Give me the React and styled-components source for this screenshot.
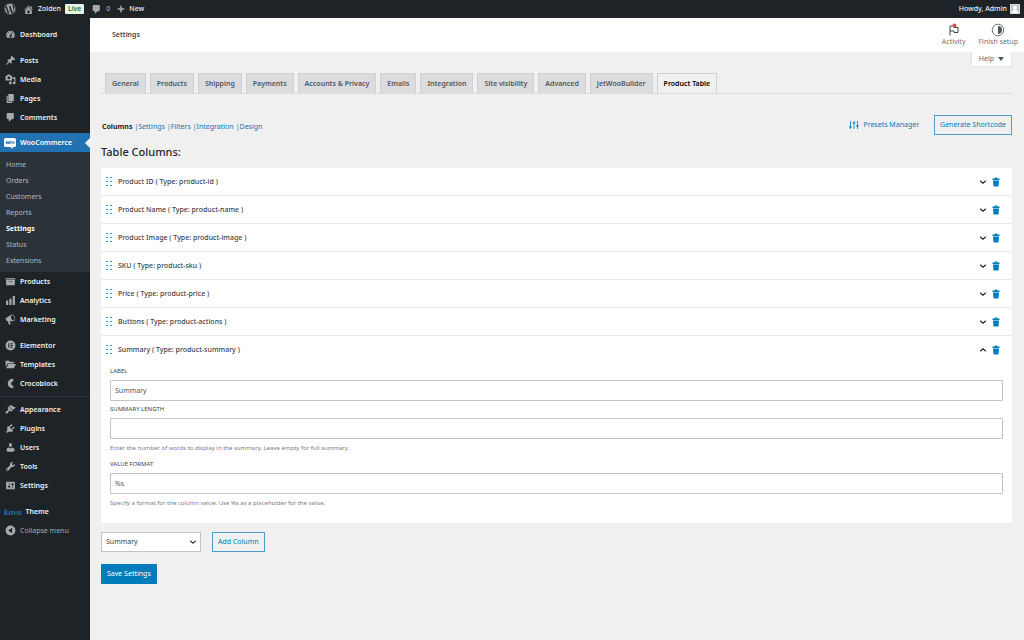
import React, { useState } from 'react'
import styled, { createGlobalStyle, css } from 'styled-components'
import { FaWordpress, FaPlus } from 'react-icons/fa'

const icons = {
  dashboard: 'M3.76 16h12.48c1.1-1.37 1.76-3.11 1.76-5 0-4.42-3.58-8-8-8s-8 3.58-8 8c0 1.89.66 3.63 1.76 5zM10 4c.55 0 1 .45 1 1s-.45 1-1 1-1-.45-1-1 .45-1 1-1zM6 6c.55 0 1 .45 1 1s-.45 1-1 1-1-.45-1-1 .45-1 1-1zm8 0c.55 0 1 .45 1 1s-.45 1-1 1-1-.45-1-1 .45-1 1-1zm-5.37 5.55L12 7v6c0 1.1-.9 2-2 2s-2-.9-2-2c0-.57.24-1.08.63-1.45zM4 10c.55 0 1 .45 1 1s-.45 1-1 1-1-.45-1-1 .45-1 1-1zm12 0c.55 0 1 .45 1 1s-.45 1-1 1-1-.45-1-1 .45-1 1-1z',
  home: 'M16 8.5l1.53 1.53-1.06 1.06L10 4.6l-6.47 6.49-1.06-1.06L10 2.5l4 4v-2h2v4zm-6-2.46l6 5.99V18H4v-5.97zM12 17v-5H8v5h4z',
  pin: 'M10.44 3.02l1.82-1.82 6.36 6.35-1.83 1.82c-1.05-.68-2.48-.57-3.41.36l-.75.75c-.92.93-1.04 2.35-.35 3.41l-1.83 1.82-2.41-2.41-2.8 2.79c-.42.42-3.38 2.71-3.8 2.29s1.86-3.39 2.28-3.81l2.79-2.79L4.1 9.36l1.83-1.82c1.05.69 2.48.57 3.4-.36l.75-.75c.93-.92 1.05-2.35.36-3.41z',
  media: 'M13 11V4c0-.55-.45-1-1-1h-1.67L9 1H5L3.67 3H2c-.55 0-1 .45-1 1v7c0 .55.45 1 1 1h10c.55 0 1-.45 1-1zM7 4.5c1.38 0 2.5 1.12 2.5 2.5S8.38 9.5 7 9.5 4.5 8.38 4.5 7 5.62 4.5 7 4.5zM14 6h5v10.5c0 1.38-1.12 2.5-2.5 2.5S14 17.88 14 16.5s1.12-2.5 2.5-2.5c.17 0 .34.02.5.05V9h-3V6zm-4 8.05V13h2v3.5c0 1.38-1.12 2.5-2.5 2.5S7 17.88 7 16.5 8.12 14 9.5 14c.17 0 .34.02.5.05z',
  page: 'M6 15V2h10v13H6zm-1 1h8v2H3V5h2v11z',
  comment: 'M5 2h9c1.1 0 2 .9 2 2v7c0 1.1-.9 2-2 2h-2l-5 5v-5H5c-1.1 0-2-.9-2-2V4c0-1.1.9-2 2-2z',
  archive: 'M19 4v2H1V4h18zM2 7h16v10H2V7zm11 3V9H7v1h6z',
  chart: 'M18 18V2h-4v16h4zm-6 0V7H8v11h4zm-6 0v-8H2v8h4z',
  megaphone: 'M18.15 5.94c.46 1.62.38 3.22-.02 4.48-.42 1.28-1.26 2.18-2.3 2.48-.16.06-.26.06-.4.06-.06.02-.12.02-.18.02-.06.02-.14.02-.22.02h-6.8l2.22 5.5c.02.14-.06.26-.14.34-.08.1-.24.16-.34.16H6.95c-.1 0-.26-.06-.34-.16-.08-.08-.16-.2-.14-.34l-1-5.5H4.25l-.02-.02c-.5.06-1.08-.18-1.54-.62s-.88-1.08-1.06-1.88c-.24-.8-.2-1.56-.02-2.2.18-.62.58-1.08 1.06-1.3l.02-.02 9-5.4c.1-.06.18-.1.24-.16.06-.04.14-.08.24-.12.16-.08.28-.12.5-.18 1.04-.3 2.24.1 3.22.98s1.84 2.24 2.26 3.86zm-2.58 5.98h-.02c.4-.1.74-.34 1.04-.7.58-.7.86-1.76.86-3.04 0-.64-.1-1.3-.28-1.98-.34-1.36-1.02-2.5-1.78-3.24s-1.68-1.1-2.46-.88c-.82.22-1.4.96-1.7 2-.32 1.04-.28 2.36.06 3.72.38 1.36 1 2.5 1.8 3.24.78.74 1.62 1.1 2.48.88z',
  elementor: 'M10 1a9 9 0 1 0 0 18 9 9 0 0 0 0-18zM6 6h2v8H6V6zm4 0h4v1.6h-4V6zm0 3.2h4v1.6h-4V9.2zm0 3.2h4V14h-4v-1.6z',
  folder: 'M1 3h6l2 2h7v3H5l-4 6V3zm5 6h14l-4 8H2l4-8z',
  croco: 'M15 1.500A8.600 8.600 0 0 0 5 10a8.600 8.600 0 0 0 10 8.500v-4.300a4.400 4.400 0 0 1-4-4.200 4.400 4.400 0 0 1 4-4.200z',
  appearance: 'M14.48 11.06L7.41 3.99l1.5-1.5c.5-.56 2.3-.47 3.51.32 1.21.8 1.43 1.28 2.91 2.1 1.18.64 2.45 1.26 4.45.85zm-.71.71L6.7 4.7 4.93 6.47c-.39.39-.39 1.02 0 1.41l1.06 1.06c.39.39.39 1.03 0 1.42-.6.6-1.43 1.11-2.21 1.69-.35.26-.7.53-1.01.84C1.43 14.23.4 16.08 1.4 17.07c.99 1 2.84-.03 4.18-1.36.31-.31.58-.66.85-1.02.57-.78 1.08-1.61 1.69-2.21.39-.39 1.02-.39 1.41 0l1.06 1.06c.39.39 1.02.39 1.41 0z',
  plugins: 'M13.11 4.36L9.87 7.6 8 5.73l3.24-3.24c.35-.34 1.05-.2 1.56.32.52.51.66 1.21.31 1.55zm-8 1.77l.91-1.12 9.01 9.01-1.19.84c-.71.71-2.63 1.16-3.82 1.16H6.14L4.9 17.26c-.59.59-1.54.59-2.12 0-.59-.58-.59-1.53 0-2.12l1.24-1.24v-3.88c0-1.13.4-3.19 1.09-3.89zm7.26 3.97l3.24-3.24c.34-.35 1.04-.21 1.55.31.52.51.66 1.21.31 1.55l-3.24 3.25z',
  users: 'M10 9.25c-2.27 0-2.73-3.44-2.73-3.44C7 4.02 7.82 2 9.97 2c2.16 0 2.98 2.02 2.71 3.81 0 0-.41 3.44-2.68 3.44zm0 2.57L12.72 10c2.39 0 4.52 2.33 4.52 4.53v2.49s-3.65 1.13-7.24 1.13c-3.65 0-7.24-1.13-7.24-1.13v-2.49c0-2.25 1.94-4.48 4.47-4.48z',
  tools: 'M16.68 9.77c-1.34 1.34-3.3 1.67-4.95.99l-5.41 6.52c-.99.99-2.59.99-3.58 0s-.99-2.59 0-3.57l6.52-5.42c-.68-1.65-.35-3.61.99-4.95 1.28-1.28 3.12-1.62 4.72-1.06l-2.89 2.89 2.82 2.82 2.86-2.87c.53 1.58.18 3.39-1.08 4.65zM3.81 16.21c.4.39 1.04.39 1.43 0 .4-.4.4-1.04 0-1.43-.39-.4-1.03-.4-1.43 0-.39.39-.39 1.03 0 1.43z',
  settings: 'M18 16V4c0-.55-.45-1-1-1H3c-.55 0-1 .45-1 1v12c0 .55.45 1 1 1h14c.55 0 1-.45 1-1zM8 11h1c.55 0 1 .45 1 1s-.45 1-1 1H8v1.5c0 .28-.22.5-.5.5s-.5-.22-.5-.5V13H6c-.55 0-1-.45-1-1s.45-1 1-1h1V5.5c0-.28.22-.5.5-.5s.5.22.5.5V11zm5-2h-1c-.55 0-1-.45-1-1s.45-1 1-1h1V5.5c0-.28.22-.5.5-.5s.5.22.5.5V7h1c.55 0 1 .45 1 1s-.45 1-1 1h-1v5.5c0 .28-.22.5-.5.5s-.5-.22-.5-.5V9z',
  collapse: 'M10 1a9 9 0 1 0 0 18 9 9 0 0 0 0-18zm3 4v10l-7-5z',
  trash: 'M3 3h4l1-2h4l1 2h4v3H3V3zm1 4h12l-1 12H5L4 7z',
  up: 'M3 13l7-6 7 6',
  down: 'M3 7l7 6 7-6',
}

const Icon = ({ name, size = 11 }) => (
  <svg width={size} height={size} viewBox="0 0 20 20" fill="currentColor" fillRule="evenodd" aria-hidden="true">
    <path d={icons[name]} />
  </svg>
)

const Chevron = ({ up }) => (
  <svg width="8" height="8" viewBox="0 0 20 20" fill="none" stroke="currentColor" strokeWidth="3" aria-hidden="true">
    <path d={up ? icons.up : icons.down} />
  </svg>
)

const WooIcon = () => (
  <svg width="12" height="12" viewBox="0 0 24 24" aria-hidden="true">
    <path fill="#fff" d="M3 2h18a3 3 0 0 1 3 3v12a3 3 0 0 1-3 3h-4l1 4-6-4H3a3 3 0 0 1-3-3V5a3 3 0 0 1 3-3z" />
    <path fill="none" stroke="#2271b1" strokeWidth="1.8" d="M4 8l1.500 6L8 9l1.500 5L11 8" />
    <circle cx="14" cy="11" r="2" fill="none" stroke="#2271b1" strokeWidth="1.600" />
    <circle cx="19" cy="11" r="2" fill="none" stroke="#2271b1" strokeWidth="1.600" />
  </svg>
)

const FlagIcon = () => (
  <svg width="12" height="14" viewBox="0 0 12 14" fill="none" aria-hidden="true">
    <path d="M2 12.500V3h4v1.500h4v5H6V8H2" stroke="#3c434a" />
    <circle cx="6.500" cy="2.500" r="2" fill="#d94f4f" />
  </svg>
)

const SetupIcon = () => (
  <svg width="14" height="14" viewBox="0 0 14 14" aria-hidden="true">
    <circle cx="7" cy="7" r="5.800" fill="none" stroke="#757575" />
    <path d="M7 3a4 4 0 0 1 0 8z" fill="#50575e" />
  </svg>
)

const SlidersIcon = () => (
  <svg width="10" height="10" viewBox="0 0 10 10" stroke="#007cba" fill="none" aria-hidden="true">
    <path d="M1.500 1v8M5 1v8M8.500 1v8" strokeWidth=".8" />
    <path d="M0 7h3M3.500 3h3M7 6h3" />
  </svg>
)

const HandleIcon = () => (
  <svg width="6" height="9" viewBox="0 0 6 9" fill="#2f97c9" aria-hidden="true">
    {[0, 4, 8].map(y => (
      <React.Fragment key={y}>
        <rect x="0" y={y} width="2" height="1" />
        <rect x="4" y={y} width="2" height="1" />
      </React.Fragment>
    ))}
  </svg>
)

const menuGroups = [
  [['Dashboard', 'dashboard']],
  [['Posts', 'pin'], ['Media', 'media'], ['Pages', 'page'], ['Comments', 'comment']],
  [['WooCommerce', 'woo'], ['Products', 'archive'], ['Analytics', 'chart'], ['Marketing', 'megaphone']],
  [['Elementor', 'elementor'], ['Templates', 'folder'], ['Crocoblock', 'croco']],
  [['Appearance', 'appearance'], ['Plugins', 'plugins'], ['Users', 'users'], ['Tools', 'tools'], ['Settings', 'settings']],
]
const submenu = ['Home', 'Orders', 'Customers', 'Reports', 'Settings', 'Status', 'Extensions']
const tabs = ['General', 'Products', 'Shipping', 'Payments', 'Accounts & Privacy', 'Emails', 'Integration', 'Site visibility', 'Advanced', 'JetWooBuilder', 'Product Table']
const sections = ['Columns', 'Settings', 'Filters', 'Integration', 'Design']
const columns = [
  ['Product ID', 'product-id'],
  ['Product Name', 'product-name'],
  ['Product Image', 'product-image'],
  ['SKU', 'product-sku'],
  ['Price', 'product-price'],
  ['Buttons', 'product-actions'],
  ['Summary', 'product-summary'],
]

function App() {
  const [open, setOpen] = useState('Summary')
  const [label, setLabel] = useState('Summary')
  const [length, setLength] = useState('')
  const [format, setFormat] = useState('%s')

  return (
    <Page>
      <GlobalStyle />
      <AdminBar>
        <BarLink href="#wp" aria-label="About WordPress"><FaWordpress size={12} color="#a7aaad" /></BarLink>
        <BarLink href="#site"><Icon name="home" />Zolden <Live>Live</Live></BarLink>
        <BarLink href="#comments" $muted><Icon name="comment" />0</BarLink>
        <BarLink href="#new"><FaPlus size={8} color="#a7aaad" />New</BarLink>
        <Account href="#profile">Howdy, Admin
          <Avatar>
            <svg width="8" height="8" viewBox="0 0 10 10" fill="#fff" aria-hidden="true">
              <circle cx="5" cy="3.500" r="2.500" />
              <path d="M1 10V9q1-3 4-3t4 3v1z" />
            </svg>
          </Avatar>
        </Account>
      </AdminBar>
      <Body>
        <Sidebar>
          {menuGroups.map((group, i) => (
            <MenuGroup key={i} $line={i === 4} $tight={i === 2}>
              {group.map(([text, icon]) => (
                <React.Fragment key={text}>
                  <MenuItem href={'#' + icon} $active={icon === 'woo'}>
                    <MenuIcon>{icon === 'woo' ? <WooIcon /> : <Icon name={icon} />}</MenuIcon>{text}
                  </MenuItem>
                  {icon === 'woo' && (
                    <Submenu>
                      {submenu.map(item => (
                        <SubItem key={item} href="#woo" $active={item === 'Settings'}>{item}</SubItem>
                      ))}
                    </Submenu>
                  )}
                </React.Fragment>
              ))}
            </MenuGroup>
          ))}
          <MenuGroup>
            <ThemeItem href="#theme"><Kava>kava</Kava>Theme</ThemeItem>
            <Collapse type="button"><MenuIcon><Icon name="collapse" /></MenuIcon>Collapse menu</Collapse>
          </MenuGroup>
        </Sidebar>
        <Main>
          <Header>
            <HeaderTitle>Settings</HeaderTitle>
            <HeaderButton type="button"><FlagIcon />Activity</HeaderButton>
            <HeaderButton type="button"><SetupIcon />Finish setup</HeaderButton>
          </Header>
          <Content>
            <Help type="button">Help <Arrow /></Help>
            <Tabs>
              {tabs.map(tab => (
                <Tab key={tab} href="#tab" $active={tab === 'Product Table'}>{tab}</Tab>
              ))}
            </Tabs>
            <Toolbar>
              <Sections>
                {sections.map((s, i) => (
                  <li key={s}><SectionLink href="#section" $active={i === 0}>{s}</SectionLink></li>
                ))}
              </Sections>
              <Presets type="button"><SlidersIcon />Presets Manager</Presets>
              <OutlineButton type="button">Generate Shortcode</OutlineButton>
            </Toolbar>
            <Title>Table Columns:</Title>
            <List>
              {columns.map(([name, type]) => (
                <Item key={type}>
                  <ItemHead>
                    <HandleIcon />
                    <ItemName>{name} ( Type: {type} )</ItemName>
                    <IconButton
                      type="button"
                      aria-label={'Toggle ' + name}
                      aria-expanded={open === name}
                      onClick={() => setOpen(open === name ? '' : name)}
                    >
                      <Chevron up={open === name} />
                    </IconButton>
                    <IconButton type="button" aria-label={'Delete ' + name} $blue><Icon name="trash" size={10} /></IconButton>
                  </ItemHead>
                  {open === name && (
                    <Fields>
                      <Label htmlFor="label">Label</Label>
                      <Input id="label" value={label} onChange={e => setLabel(e.target.value)} />
                      <Label htmlFor="length">Summary length</Label>
                      <Input id="length" value={length} onChange={e => setLength(e.target.value)} />
                      <Hint>Enter the number of words to display in the summary. Leave empty for full summary.</Hint>
                      <Label htmlFor="format">Value format</Label>
                      <Input id="format" value={format} onChange={e => setFormat(e.target.value)} />
                      <Hint>Specify a format for the column value. Use %s as a placeholder for the value.</Hint>
                    </Fields>
                  )}
                </Item>
              ))}
            </List>
            <AddRow>
              <SelectWrap>
                <Select aria-label="Column type" defaultValue="Summary">
                  {columns.map(([name]) => <option key={name}>{name}</option>)}
                </Select>
                <SelectArrow><Chevron /></SelectArrow>
              </SelectWrap>
              <OutlineButton type="button">Add Column</OutlineButton>
            </AddRow>
            <SaveButton type="button">Save Settings</SaveButton>
          </Content>
        </Main>
      </Body>
    </Page>
  )
}
export default App

const GlobalStyle = createGlobalStyle`
  * {
    box-sizing: border-box;
  }
  body {
    margin: 0;
    background: #f0f0f0;
    color: #3c434a;
    font-family: "Noto Sans", "Open Sans", sans-serif;
    font-size: 7px;
    line-height: 10px;
  }
  button, input, select {
    font: inherit;
    color: inherit;
  }
  button {
    padding: 0;
    border: none;
    background: none;
    cursor: pointer;
    white-space: nowrap;
  }
  a {
    text-decoration: none;
    white-space: nowrap;
  }
  svg {
    flex: none;
  }
`
const Page = styled.div`
  min-height: 100vh;
  display: flex;
  flex-direction: column;
`
const AdminBar = styled.header`
  height: 18px;
  padding: 0 4px;
  display: flex;
  align-items: center;
  gap: 7px;
  background: #1d2327;
`
const BarLink = styled.a`
  display: flex;
  align-items: center;
  gap: 4px;
  color: ${p => (p.$muted ? '#a7aaad' : '#f0f0f1')};
  font-weight: 500;
  > svg {
    color: #a7aaad;
  }
`
const Live = styled.span`
  padding: 0 3px;
  border-radius: 1px;
  background: #e6f2e8;
  color: #007017;
`
const Account = styled(BarLink)`
  margin-left: auto;
  gap: 3px;
`
const Avatar = styled.span`
  display: flex;
  background: #c3c4c7;
  border: 1px solid #dcdcde;
`
const Body = styled.div`
  flex: 1;
  display: flex;
`
const Sidebar = styled.nav`
  flex: none;
  width: 90px;
  background: #1d2327;
`
const MenuGroup = styled.div`
  padding-top: ${p => (p.$tight ? '6px' : '7px')};
  ${p => p.$line && css`
    box-shadow: inset 0 3px #1d2327, inset 0 4px #2c3338;
  `}
`
const menuRow = css`
  width: 100%;
  height: 19px;
  display: flex;
  align-items: center;
  padding-left: 4px;
  gap: 4px;
  color: #f0f0f1;
  font-weight: 600;
`
const MenuItem = styled.a`
  ${menuRow}
  ${p => p.$active && css`
    position: relative;
    background: #2271b1;
    color: #fff;
    &::after {
      content: '';
      position: absolute;
      right: 0;
      border: 5px solid transparent;
      border-right-color: #f0f0f0;
      border-left-width: 0;
    }
  `}
`
const MenuIcon = styled.span`
  width: 12px;
  display: flex;
  justify-content: center;
  color: #a7aaad;
`
const ThemeItem = styled.a`
  ${menuRow}
`
const Kava = styled.span`
  color: #2271b1;
  font-family: "Liberation Serif", serif;
  font-size: 9px;
  font-style: italic;
  font-weight: 700;
`
const Collapse = styled.button`
  ${menuRow}
  color: #a7aaad;
  font-weight: 400;
`
const Submenu = styled.div`
  padding: 5px 0 3px;
  background: #2c3338;
`
const SubItem = styled.a`
  display: block;
  padding-left: 6px;
  line-height: 16px;
  color: ${p => (p.$active ? '#fff' : '#b4b9be')};
  font-weight: ${p => (p.$active ? 700 : 400)};
`
const Main = styled.main`
  flex: 1;
  min-width: 0;
`
const Header = styled.div`
  height: 34px;
  padding: 0 6px 0 22px;
  display: flex;
  align-items: center;
  gap: 13px;
  background: #fff;
`
const HeaderTitle = styled.h1`
  flex: 1;
  margin: 0;
  font-size: 7px;
  font-weight: 600;
`
const HeaderButton = styled.button`
  display: flex;
  flex-direction: column;
  align-items: center;
  color: #757575;
  svg {
    height: 14px;
  }
`
const Content = styled.div`
  display: flex;
  flex-direction: column;
  padding: 0 12px 0 11px;
`
const Help = styled.button`
  align-self: flex-end;
  height: 15px;
  padding: 0 7px;
  display: flex;
  align-items: center;
  gap: 4px;
  background: #fff;
  border: 1px solid #e5e5e5;
  border-top: none;
  color: #646970;
`
const Arrow = styled.span`
  border: 3px solid transparent;
  border-top: 4px solid #50575e;
  border-bottom: none;
`
const Tabs = styled.nav`
  display: flex;
  gap: 4px;
  margin-top: 6px;
  padding-left: 4px;
  border-bottom: 1px solid #dcdcde;
`
const Tab = styled.a`
  height: 20px;
  padding: 0 6px;
  margin-bottom: ${p => (p.$active ? '-1px' : '0')};
  display: flex;
  align-items: center;
  border: 1px solid #d0d1d4;
  border-bottom: none;
  background: ${p => (p.$active ? '#f0f0f0' : '#dcdcde')};
  color: ${p => (p.$active ? '#000' : '#50575e')};
  font-weight: 600;
`
const Toolbar = styled.div`
  display: flex;
  align-items: center;
  margin-top: 21px;
`
const Sections = styled.ul`
  flex: 1;
  display: flex;
  gap: 2px;
  margin: 0;
  padding: 3px 1px 0;
  list-style: none;
  color: #2271b1;
  li + li::before {
    content: '|';
  }
`
const SectionLink = styled.a`
  color: ${p => (p.$active ? '#1d2327' : '#2271b1')};
  font-weight: ${p => (p.$active ? 700 : 400)};
`
const Presets = styled.button`
  display: flex;
  align-items: center;
  gap: 4px;
  margin-right: 15px;
  color: #007cba;
`
const OutlineButton = styled.button`
  height: 20px;
  padding: 0 5px;
  border: 1px solid #4c9fcb;
  color: #007cba;
`
const Title = styled.h2`
  margin: 9px 0 8px;
  color: #23282d;
  font-size: 11px;
  font-weight: 500;
  line-height: 16px;
`
const List = styled.ul`
  margin: 0;
  padding: 0;
  list-style: none;
  background: #fff;
`
const Item = styled.li`
  border-bottom: 1px solid #ebebeb;
  &:last-child {
    border-bottom: none;
  }
`
const ItemHead = styled.div`
  height: 27px;
  display: flex;
  align-items: center;
  padding: 0 11px 0 5px;
  gap: 4px;
`
const ItemName = styled.span`
  flex: 1;
  padding-left: 2px;
  font-weight: 500;
`
const IconButton = styled.button`
  display: flex;
  color: ${p => (p.$blue ? '#007cba' : '#23282d')};
`
const Fields = styled.div`
  display: flex;
  flex-direction: column;
  padding: 3px 9px 9px;
`
const Label = styled.label`
  margin-bottom: 4px;
  font-size: 6px;
  text-transform: uppercase;
`
const Input = styled.input`
  height: 21px;
  margin-bottom: 3px;
  padding: 0 4px;
  border: 1px solid #c3c4c7;
  border-radius: 1px;
  background: #fff;
  color: #50575e;
`
const Hint = styled.p`
  margin: 1px 0 6px;
  color: #7b7e81;
  font-size: 6px;
`
const AddRow = styled.div`
  display: flex;
  gap: 11px;
  margin: 9px 0 12px;
`
const SelectWrap = styled.div`
  position: relative;
  width: 100px;
`
const Select = styled.select`
  appearance: none;
  width: 100%;
  height: 20px;
  padding: 0 4px;
  border: 1px solid #c3c4c7;
  border-radius: 0;
  background: #fff;
`
const SelectArrow = styled.span`
  position: absolute;
  top: 6px;
  right: 4px;
  display: flex;
  pointer-events: none;
`
const SaveButton = styled.button`
  align-self: flex-start;
  height: 20px;
  padding: 0 6px;
  border-radius: 1px;
  background: #007cba;
  color: #fff;
`
